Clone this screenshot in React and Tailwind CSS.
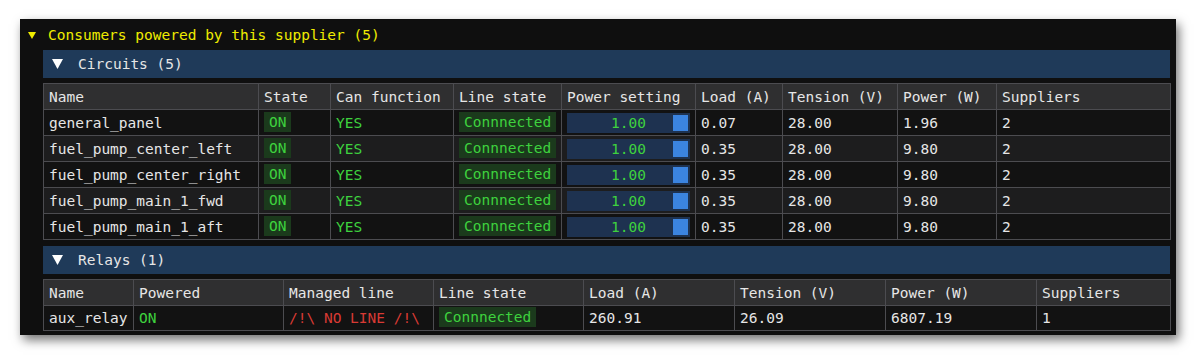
import React from "react";

const mono = "font-['DejaVu_Sans_Mono','Liberation_Mono',monospace] text-[14.5px]";

const circuitCols = [
  { label: "Name", w: "w-[215px]" },
  { label: "State", w: "w-[72px]" },
  { label: "Can function", w: "w-[123px]" },
  { label: "Line state", w: "w-[108px]" },
  { label: "Power setting", w: "w-[134px]" },
  { label: "Load (A)", w: "w-[87px]" },
  { label: "Tension (V)", w: "w-[115px]" },
  { label: "Power (W)", w: "w-[99px]" },
  { label: "Suppliers", w: "w-[174px]" },
];

const circuits = [
  { name: "general_panel", load: "0.07", tension: "28.00", power: "1.96", sup: "2" },
  { name: "fuel_pump_center_left", load: "0.35", tension: "28.00", power: "9.80", sup: "2" },
  { name: "fuel_pump_center_right", load: "0.35", tension: "28.00", power: "9.80", sup: "2" },
  { name: "fuel_pump_main_1_fwd", load: "0.35", tension: "28.00", power: "9.80", sup: "2" },
  { name: "fuel_pump_main_1_aft", load: "0.35", tension: "28.00", power: "9.80", sup: "2" },
];

const relayCols = [
  { label: "Name", w: "w-[90px]" },
  { label: "Powered", w: "w-[150px]" },
  { label: "Managed line", w: "w-[150px]" },
  { label: "Line state", w: "w-[150px]" },
  { label: "Load (A)", w: "w-[151px]" },
  { label: "Tension (V)", w: "w-[151px]" },
  { label: "Power (W)", w: "w-[151px]" },
  { label: "Suppliers", w: "w-[134px]" },
];

function Badge({ children }) {
  return (
    <span className="inline-block bg-[#1b3a1c] text-[#3ed23e] px-[5px] h-[20px] leading-[20px]">
      {children}
    </span>
  );
}

function Slider() {
  return (
    <div className="relative h-[20px] bg-[#1e3250] text-[#3ed23e] text-center leading-[21px] mr-[5px]">
      1.00
      <span className="absolute right-[2px] top-[2px] w-[15px] h-[16px] bg-[#3b84e0]" />
    </div>
  );
}

function SectionBar({ title }) {
  return (
    <div className="flex items-center h-[28px] bg-[#1f3a59] text-[#e6e6e6]">
      <svg width="11" height="10" viewBox="0 0 11 10" className="ml-[9px] mr-[15px]">
        <polygon points="0,0 11,0 5.5,10" fill="#ffffff" />
      </svg>
      <span className="pt-[2px]">{title}</span>
    </div>
  );
}

function HeadRow({ cols }) {
  return (
    <tr className="bg-[#2f2f30] h-[26px]">
      {cols.map((c) => (
        <td key={c.label} className={`${c.w} border border-[#4c4c50] pl-[5px] pt-[2px] text-[#e6e6e6] whitespace-nowrap`}>
          {c.label}
        </td>
      ))}
    </tr>
  );
}

const td = "border-x border-[#4c4c50] pl-[5px] whitespace-nowrap";
const tx = `${td} pt-[2px]`;

export default function App() {
  return (
    <div className="bg-white w-[1196px] h-[355px] pt-[19px] pl-[20px]">
      <div className={`${mono} w-[1156px] h-[316px] bg-[#0f0f0f] shadow-[3px_5px_10px_rgba(0,0,0,0.55)] flex flex-col`}>
        <div className="flex items-center h-[31px] text-[#efec00]">
          <svg width="8" height="7" viewBox="0 0 8 7" className="ml-[8px] mr-[12px] mt-[1px]">
            <polygon points="0,0 8,0 4,7" fill="#efec00" />
          </svg>
          <span className="pt-[3px]">Consumers powered by this supplier (5)</span>
        </div>

        <div className="ml-[23px] mr-[6px] flex flex-col">
          <SectionBar title="Circuits (5)" />
          <table className="table-fixed border-collapse w-[1127px] mt-[5px] text-[#e6e6e6]">
            <tbody>
              <HeadRow cols={circuitCols} />
              {circuits.map((r, i) => (
                <tr key={r.name} className={`h-[26px] border-b border-[#4c4c50] ${i % 2 ? "bg-[#1d1d1e]" : "bg-[#121212]"}`}>
                  <td className={tx}>{r.name}</td>
                  <td className={td}><Badge>ON</Badge></td>
                  <td className={`${tx} text-[#3ed23e]`}>YES</td>
                  <td className={td}><Badge>Connnected</Badge></td>
                  <td className={td}><Slider /></td>
                  <td className={tx}>{r.load}</td>
                  <td className={tx}>{r.tension}</td>
                  <td className={tx}>{r.power}</td>
                  <td className={tx}>{r.sup}</td>
                </tr>
              ))}
            </tbody>
          </table>

          <div className="mt-[6px]">
            <SectionBar title="Relays (1)" />
          </div>
          <table className="table-fixed border-collapse w-[1127px] mt-[5px] text-[#e6e6e6]">
            <tbody>
              <HeadRow cols={relayCols} />
              <tr className="h-[25px] border-b border-[#4c4c50] bg-[#121212]">
                <td className={tx}>aux_relay</td>
                <td className={`${tx} text-[#3ed23e]`}>ON</td>
                <td className={`${tx} text-[#d93a34]`}>/!\ NO LINE /!\</td>
                <td className={td}><Badge>Connnected</Badge></td>
                <td className={tx}>260.91</td>
                <td className={tx}>26.09</td>
                <td className={tx}>6807.19</td>
                <td className={tx}>1</td>
              </tr>
            </tbody>
          </table>
        </div>
      </div>
    </div>
  );
}
